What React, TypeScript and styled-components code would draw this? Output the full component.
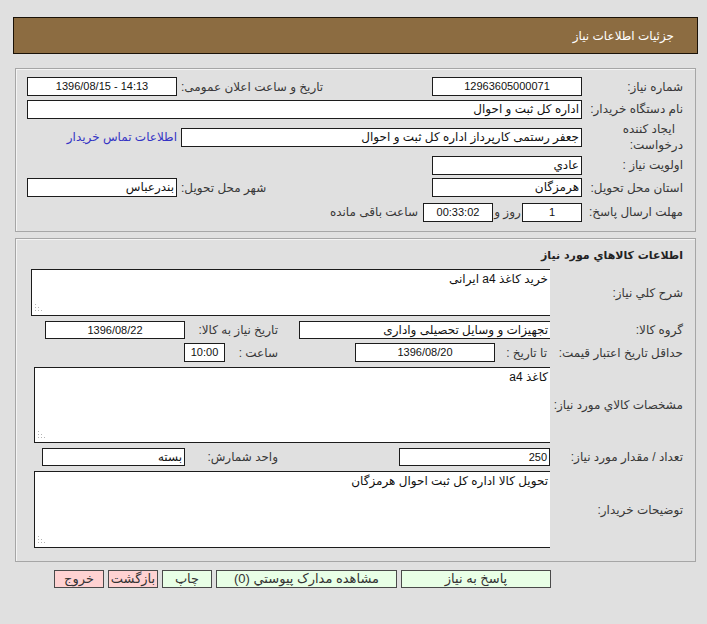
import React from 'react';
import styled, { createGlobalStyle } from 'styled-components';

const GlobalStyle = createGlobalStyle`
  html, body {
    margin: 0;
    padding: 0;
    background: #e0e0e0;
  }
  body {
    font-family: "Liberation Sans", "DejaVu Sans", sans-serif;
    font-size: 12px;
    color: #222;
  }
`;

function Grip() {
  return (
    <GripMark width="8" height="8" viewBox="0 0 8 8">
      <rect x="0" y="0" width="1" height="1" />
      <rect x="0" y="3" width="1" height="1" />
      <rect x="3" y="3" width="1" height="1" />
      <rect x="0" y="6" width="1" height="1" />
      <rect x="3" y="6" width="1" height="1" />
      <rect x="6" y="6" width="1" height="1" />
    </GripMark>
  );
}

function App() {
  return (
    <Page>
      <GlobalStyle />
      <TitleBar>جزئیات اطلاعات نیاز</TitleBar>

      <Panel $h={164} $pt={6}>
        <Row $h={23}>
          <Label $w={111}>شماره نیاز:</Label>
          <Field $w={150} $align="center" $num>12963605000071</Field>
          <Label $w={253} $pl={2} $align="left">تاریخ و ساعت اعلان عمومی:</Label>
          <Field $w={150} $align="center" $num $ltr>1396/08/15 - 14:13</Field>
        </Row>
        <Row $h={22}>
          <Label $w={111}>نام دستگاه خریدار:</Label>
          <Field $w={555}>اداره کل ثبت و احوال</Field>
        </Row>
        <Row $h={34}>
          <Label $w={111}>
            <Line $indent={8}>ایجاد کننده</Line>
            <Line>درخواست:</Line>
          </Label>
          <Field $w={401}>جعفر رستمی کارپرداز اداره کل ثبت و احوال</Field>
          <ContactLink href="#">اطلاعات تماس خریدار</ContactLink>
        </Row>
        <Row $h={22}>
          <Label $w={111}>اولویت نیاز :</Label>
          <Field $w={150}>عادي</Field>
        </Row>
        <Row $h={23}>
          <Label $w={111}>استان محل تحویل:</Label>
          <Field $w={150}>هرمزگان</Field>
          <Label $w={253} $pl={2} $align="left">شهر محل تحویل:</Label>
          <Field $w={150}>بندرعباس</Field>
        </Row>
        <Row $h={26}>
          <Label $w={111}>مهلت ارسال پاسخ:</Label>
          <Field $w={60} $align="center" $num>1</Field>
          <Label $w={29} $pr={0} $align="center">روز و</Label>
          <Field $w={70} $mr={0} $align="center" $num $ltr>00:33:02</Field>
          <Label $w={120} $pr={5}>ساعت باقی مانده</Label>
        </Row>
      </Panel>

      <Panel $h={324} $pt={6} $mt={6}>
        <Row $h={20}>
          <SectionTitle>اطلاعات كالاهاي مورد نياز</SectionTitle>
        </Row>
        <Row $h={47} $mt={4}>
          <Label $w={145}>شرح کلي نیاز:</Label>
          <Memo $w={519} $h={47}>
            خرید کاغذ a4 ایرانی
            <Grip />
          </Memo>
        </Row>
        <Row $h={18} $mt={5}>
          <Label $w={145}>گروه کالا:</Label>
          <Field $w={251} $h={18} $mr={0} $open>تجهیزات و وسایل تحصیلی واداری</Field>
          <Label $w={112} $pr={21}>تاریخ نیاز به کالا:</Label>
          <Field $w={140} $h={18} $align="center" $num $ltr>1396/08/22</Field>
        </Row>
        <Row $h={19} $mt={4}>
          <Label $w={145}>حداقل تاریخ اعتبار قیمت:</Label>
          <Label $w={55} $pr={3}>تا تاریخ :</Label>
          <Field $w={140} $mr={0} $align="center" $num $ltr>1396/08/20</Field>
          <Label $w={129} $pr={77}>ساعت :</Label>
          <Field $w={41} $mr={1} $align="center" $num $ltr>10:00</Field>
        </Row>
        <Row $h={76} $mt={5}>
          <Label $w={145}>مشخصات كالاي مورد نياز:</Label>
          <Memo $w={516} $h={76}>
            کاغذ a4
            <Grip />
          </Memo>
        </Row>
        <Row $h={18} $mt={5}>
          <Label $w={145}>تعداد / مقدار مورد نیاز:</Label>
          <Field $w={151} $h={18} $mr={0} $num>250</Field>
          <Label $w={212} $pr={121}>واحد شمارش:</Label>
          <Field $w={143} $h={18}>بسته</Field>
        </Row>
        <Row $h={77} $mt={5}>
          <Label $w={145}>توضیحات خریدار:</Label>
          <Memo $w={516} $h={77}>
            تحویل کالا اداره کل ثبت احوال هرمزگان
            <Grip />
          </Memo>
        </Row>
      </Panel>

      <ButtonBar>
        <ActionButton $w={150}>پاسخ به نیاز</ActionButton>
        <ActionButton $w={181}>مشاهده مدارک پیوستي (0)</ActionButton>
        <ActionButton $w={50}>چاپ</ActionButton>
        <ActionButton $w={50} $danger>بازگشت</ActionButton>
        <ActionButton $w={50} $danger>خروج</ActionButton>
      </ButtonBar>
    </Page>
  );
}

export default App;

const Page = styled.div`
  direction: rtl;
  width: 707px;
  height: 624px;
  box-sizing: border-box;
  padding: 17px 9px 0 13px;
  overflow: hidden;
`;

const TitleBar = styled.div`
  height: 37px;
  box-sizing: border-box;
  background: #8c6c41;
  border: 1px solid #1a1208;
  color: #fff;
  font-size: 12px;
  display: flex;
  align-items: center;
  padding-right: 23px;
  margin-bottom: 14px;
`;

const Panel = styled.div<{ $h: number; $pt: number; $mt?: number }>`
  height: ${p => p.$h}px;
  box-sizing: border-box;
  margin: ${p => p.$mt ?? 0}px 2px 0 2px;
  padding-top: ${p => p.$pt}px;
  border: 1px solid #a6a6a6;
  box-shadow: inset 1px 1px 0 #f4f4f4;
`;

const Row = styled.div<{ $h: number; $mt?: number }>`
  display: flex;
  align-items: center;
  height: ${p => p.$h}px;
  margin-top: ${p => p.$mt ?? 0}px;
`;

const Label = styled.div<{ $w: number; $pr?: number; $pl?: number; $align?: string }>`
  flex: none;
  width: ${p => p.$w}px;
  box-sizing: border-box;
  padding-right: ${p => p.$pr ?? 12}px;
  padding-left: ${p => p.$pl ?? 0}px;
  text-align: ${p => p.$align ?? 'right'};
  white-space: nowrap;
  color: #383838;
  line-height: 16px;
`;

const Line = styled.span<{ $indent?: number }>`
  display: block;
  padding-right: ${p => p.$indent ?? 0}px;
`;

const Field = styled.div<{
  $w: number;
  $h?: number;
  $mr?: number;
  $align?: 'right' | 'center';
  $ltr?: boolean;
  $num?: boolean;
  $open?: boolean;
}>`
  flex: none;
  width: ${p => p.$w}px;
  height: ${p => p.$h ?? 19}px;
  margin-right: ${p => p.$mr ?? 2}px;
  box-sizing: border-box;
  background: #fff;
  border: 1px solid #1c1c1c;
  ${p => (p.$open ? 'border-right: none;' : '')}
  padding: 0 2px;
  font-size: ${p => (p.$num ? 11 : 12)}px;
  line-height: ${p => (p.$h ?? 19) - 2}px;
  text-align: ${p => p.$align ?? 'right'};
  direction: ${p => (p.$ltr ? 'ltr' : 'rtl')};
  white-space: nowrap;
  overflow: hidden;
  color: #111;
`;

const Memo = styled.div<{ $w: number; $h: number }>`
  position: relative;
  flex: none;
  width: ${p => p.$w}px;
  height: ${p => p.$h}px;
  box-sizing: border-box;
  background: #fff;
  border: 1px solid #1c1c1c;
  border-right: none;
  padding: 2px 2px 0 0;
  line-height: 15px;
  color: #111;
`;

const GripMark = styled.svg`
  position: absolute;
  left: 3px;
  bottom: 3px;
  fill: #b4b4b4;
`;

const ContactLink = styled.a`
  margin-right: 4px;
  color: #3434c4;
  text-decoration: none;
  white-space: nowrap;
`;

const SectionTitle = styled.div`
  padding-right: 12px;
  font-family: "DejaVu Sans", sans-serif;
  font-size: 11px;
  font-weight: bold;
  color: #222;
`;

const ButtonBar = styled.div`
  display: flex;
  gap: 4px;
  margin: 8px 147px 0 0;
`;

const ActionButton = styled.button<{ $w: number; $danger?: boolean }>`
  width: ${p => p.$w}px;
  height: 18px;
  padding: 0;
  box-sizing: border-box;
  border: 1px solid #4a4a4a;
  background: ${p => (p.$danger ? '#ffd2d2' : '#e8ffe6')};
  color: #333;
  font-family: "Liberation Sans", "DejaVu Sans", sans-serif;
  font-size: 13px;
  line-height: 16px;
  white-space: nowrap;
  overflow: hidden;
  direction: rtl;
`;
